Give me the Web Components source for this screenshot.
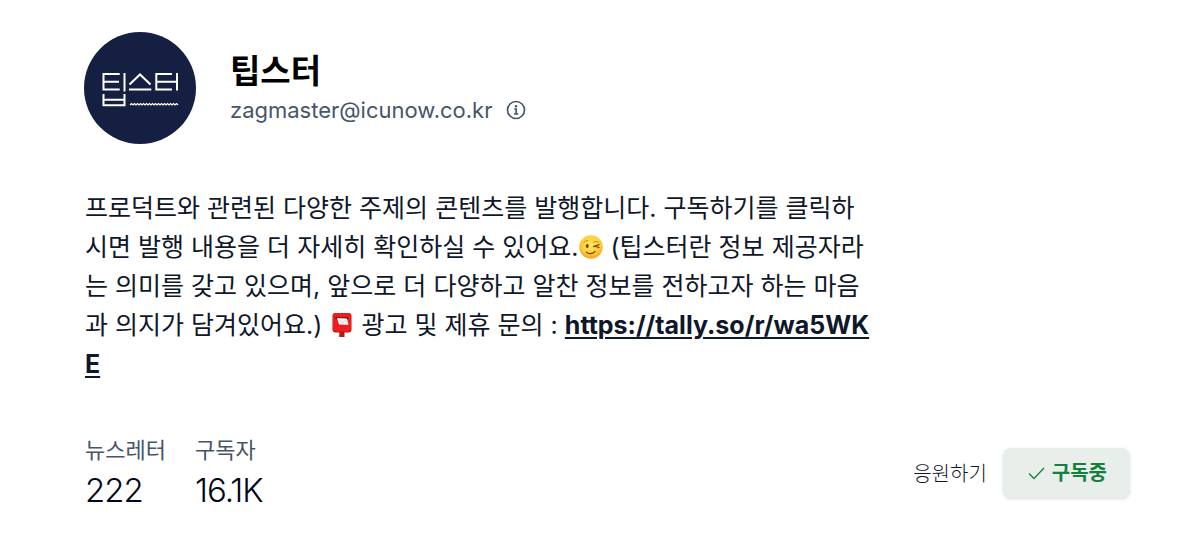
<!DOCTYPE html>
<html lang="ko">
<head>
<meta charset="utf-8">
<meta name="viewport" content="width=device-width, initial-scale=1">
<title>팁스터</title>
<style>
  body {
    margin: 0;
    background: #fff;
    color: #0f172a;
    font-family: Inter, "Noto Sans CJK KR", sans-serif;
    font-size: 25px;
  }
</style>
</head>
<body>
<creator-page>
  <creator-header slot="header" name="팁스터" email="zagmaster@icunow.co.kr"></creator-header>
  <creator-intro slot="intro">프로덕트와 관련된 다양한 주제의 콘텐츠를 발행합니다. 구독하기를 클릭하시면 발행 내용을 더 자세히 확인하실 수 있어요.<emoji-icon name="wink"></emoji-icon> (팁스터란 정보 제공자라는 의미를 갖고 있으며, 앞으로 더 다양하고 알찬 정보를 전하고자 하는 마음과 의지가 담겨있어요.) <emoji-icon name="postbox"></emoji-icon> 광고 및 제휴 문의 : <text-link href="https://tally.so/r/wa5WKE">https://tally.so/r/wa5WKE</text-link></creator-intro>
  <stat-item slot="stats" label="뉴스레터">222</stat-item>
  <stat-item slot="stats" label="구독자">16.1K</stat-item>
  <cheer-button slot="actions">응원하기</cheer-button>
  <subscribe-button slot="actions">구독중</subscribe-button>
</creator-page>

<script>
class CreatorPage extends HTMLElement {
  constructor() {
    super();
    this.attachShadow({ mode: 'open' });
  }

  connectedCallback() {
    this.shadowRoot.innerHTML = `
      <style>
        :host {
          display: block;
        }

        main {
          padding: 32px 70px 32px 85px;
        }

        .intro {
          max-width: 786px;
          margin-top: 45px;
        }

        footer {
          display: flex;
          justify-content: space-between;
          align-items: center;
          margin-top: 49px;
        }

        .stats {
          display: flex;
          gap: 29px;
        }

        .actions {
          display: flex;
          align-items: center;
          gap: 16px;
        }
      </style>

      <main>
        <slot name="header"></slot>
        <div class="intro"><slot name="intro"></slot></div>
        <footer>
          <div class="stats"><slot name="stats"></slot></div>
          <div class="actions"><slot name="actions"></slot></div>
        </footer>
      </main>
    `;
  }
}

class CreatorLogo extends HTMLElement {
  constructor() {
    super();
    this.attachShadow({ mode: 'open' });
  }

  connectedCallback() {
    this.shadowRoot.innerHTML = `
      <style>
        :host {
          display: block;
          flex: none;
        }

        svg {
          display: block;
          width: 112px;
          height: 112px;
        }
      </style>

      <svg viewBox="0 0 112 112" role="img" aria-label="팁스터 로고">
        <circle cx="56" cy="56" r="56" fill="#141f41"/>
        <g fill="none" stroke="#fff" stroke-width="2">
          <path d="M35.700 42H19.500V57.500H35.700M19.500 49.700H35"/>
          <path d="M40.500 41V59.500"/>
          <path d="M19.500 62V73.200H40.500V62M19.500 67.700H40.500"/>
          <path d="M45.500 52.500L56 42.500L66.500 52.500M45 57.500H67.300"/>
          <path d="M88 42H72.300V57.500H88M72.300 49.700H86"/>
          <path d="M93 41V58.500M86 49.700H93"/>
          <path stroke-width="1.200" d="M46 73l1.500-1.500l1.500 1.500l1.500-1.500l1.500 1.500l1.500-1.500l1.500 1.500l1.500-1.500l1.500 1.500l1.500-1.500l1.500 1.500l1.500-1.500l1.500 1.500l1.500-1.500l1.500 1.500l1.500-1.500l1.500 1.500l1.500-1.500l1.500 1.500l1.500-1.500l1.500 1.500l1.500-1.500l1.500 1.500l1.500-1.500l1.500 1.500l1.500-1.500l1.500 1.500l1.500-1.500l1.500 1.500l1.500-1.500l1.500 1.500l1.500-1.500l1.500 1.500"/>
        </g>
      </svg>
    `;
  }
}

class CreatorHeader extends HTMLElement {
  constructor() {
    super();
    this.attachShadow({ mode: 'open' });
  }

  connectedCallback() {
    this.shadowRoot.innerHTML = `
      <style>
        :host {
          display: block;
          margin-left: -1px;
        }

        header {
          display: flex;
          align-items: center;
          gap: 34px;
        }

        h1 {
          margin: 0;
          color: #000;
          font-size: 33px;
          font-weight: 700;
          line-height: 44px;
        }

        .email {
          display: flex;
          align-items: center;
          gap: 14px;
          color: #475569;
          font-size: 22px;
          line-height: 34px;
        }

        button {
          padding: 0;
          border: 0;
          background: none;
          color: inherit;
          cursor: pointer;
        }

        svg {
          display: block;
          width: 20px;
          height: 20px;
        }
      </style>

      <header>
        <creator-logo></creator-logo>
        <div>
          <h1>${this.getAttribute('name')}</h1>
          <div class="email">
            <span>${this.getAttribute('email')}</span>
            <button type="button" aria-label="정보">
              <svg viewBox="0 0 20 20" fill="none" stroke="currentColor" stroke-width="1.700">
                <circle cx="10" cy="10" r="8.500"/>
                <path d="M8.300 9H10.200V14M8 14H12.300"/>
                <circle cx="10" cy="6.200" r="1.200" fill="currentColor" stroke="none"/>
              </svg>
            </button>
          </div>
        </div>
      </header>
    `;
  }
}

class CreatorIntro extends HTMLElement {
  constructor() {
    super();
    this.attachShadow({ mode: 'open' });
  }

  connectedCallback() {
    this.shadowRoot.innerHTML = `
      <style>
        :host {
          display: block;
        }

        p {
          margin: 0;
          font-size: 25px;
          line-height: 39px;
          word-break: break-all;
        }
      </style>

      <p><slot></slot></p>
    `;
  }
}

class TextLink extends HTMLElement {
  constructor() {
    super();
    this.attachShadow({ mode: 'open' });
  }

  connectedCallback() {
    this.shadowRoot.innerHTML = `
      <style>
        :host {
          display: inline;
        }

        a {
          color: inherit;
          font-weight: 700;
          text-decoration: underline;
          text-decoration-thickness: 2px;
          text-underline-offset: 3px;
        }
      </style><a href="${this.getAttribute('href')}"><slot></slot></a>`;
  }
}

const emojis = {
  wink: `
    <svg viewBox="0 0 24 24" role="img" aria-label="😉">
      <defs>
        <radialGradient id="face" cx="50%" cy="40%" r="60%">
          <stop offset="0" stop-color="#ffe65c"/>
          <stop offset="0.650" stop-color="#ffd03b"/>
          <stop offset="1" stop-color="#f5a019"/>
        </radialGradient>
      </defs>
      <circle cx="12" cy="12" r="11.700" fill="url(#face)"/>
      <ellipse cx="8.300" cy="11" rx="1.400" ry="2.100" fill="#6b3f0c"/>
      <g fill="none" stroke="#7a4a10" stroke-linecap="round" stroke-linejoin="round">
        <path stroke-width="0.800" stroke="#b07a1c" d="M4.500 7.500Q6 5.200 9 5.600M14.500 7Q17 5.500 19.500 7.200"/>
        <path stroke-width="1.300" d="M20 9.700L14.500 11.500Q17 11.300 20 12.600"/>
        <path stroke-width="1.400" d="M7.500 17.200Q12 20.500 16 16.500"/>
      </g>
    </svg>`,
  postbox: `
    <svg viewBox="0 0 24 24" role="img" aria-label="📮">
      <path fill="#9f2020" d="M9.500 18H14.500V24H9.500z"/>
      <path fill="#c61818" d="M9.500 19H12V24H9.500z"/>
      <rect x="2.500" y="0" width="19" height="19.500" rx="3" fill="#bd1217"/>
      <rect x="3" y="0" width="18" height="18.500" rx="3" fill="#ee1d20"/>
      <path fill="#3c1014" d="M5.500 4.500H18.500V6H5.500z"/>
      <path fill="#f4f2f2" d="M7 5L17 5.500L18.500 12L9 11.500z"/>
      <path fill="none" stroke="#d4cccc" stroke-width="0.600" d="M8 6.500L13 9.500L17 6.500"/>
    </svg>`
};

class EmojiIcon extends HTMLElement {
  constructor() {
    super();
    this.attachShadow({ mode: 'open' });
  }

  connectedCallback() {
    this.shadowRoot.innerHTML = `
      <style>
        :host {
          display: inline-block;
          width: 24px;
          height: 24px;
          margin-left: 1px;
          vertical-align: -3px;
          line-height: 0;
        }

        svg {
          width: 100%;
          height: 100%;
        }
      </style>
      ${emojis[this.getAttribute('name')]}
    `;
  }
}

class StatItem extends HTMLElement {
  constructor() {
    super();
    this.attachShadow({ mode: 'open' });
  }

  connectedCallback() {
    this.shadowRoot.innerHTML = `
      <style>
        :host {
          display: block;
        }

        dl {
          margin: 0;
        }

        dt {
          color: #475569;
          font-size: 22px;
          line-height: 34px;
        }

        dd {
          margin: 0;
          color: #020617;
          font-size: 33px;
          font-weight: 300;
          line-height: 46px;
          letter-spacing: -1px;
        }
      </style>

      <dl>
        <dt>${this.getAttribute('label')}</dt>
        <dd><slot></slot></dd>
      </dl>
    `;
  }
}

class CheerButton extends HTMLElement {
  constructor() {
    super();
    this.attachShadow({ mode: 'open' });
  }

  connectedCallback() {
    this.shadowRoot.innerHTML = `
      <style>
        :host {
          display: block;
        }

        button {
          padding: 0;
          border: 0;
          background: none;
          color: #0f172a;
          font-family: inherit;
          font-size: 20px;
          font-weight: 300;
          line-height: 30px;
          cursor: pointer;
        }
      </style>

      <button type="button"><slot></slot></button>
    `;
  }
}

class SubscribeButton extends HTMLElement {
  constructor() {
    super();
    this.attachShadow({ mode: 'open' });
  }

  connectedCallback() {
    this.shadowRoot.innerHTML = `
      <style>
        :host {
          display: block;
        }

        button {
          display: flex;
          align-items: center;
          gap: 6px;
          padding: 10px 23px;
          border: 0;
          border-radius: 8px;
          background: #e8eeea;
          box-shadow: 0 1px 3px rgba(15, 23, 42, 0.15);
          color: #15803d;
          font-family: inherit;
          font-size: 20px;
          font-weight: 700;
          line-height: 30px;
          cursor: pointer;
        }

        svg {
          width: 20px;
          height: 20px;
        }
      </style>

      <button type="button" aria-pressed="true">
        <svg viewBox="0 0 20 20" fill="none" stroke="currentColor" stroke-width="1.300" aria-hidden="true">
          <path d="M3 10.500L8 15.500L18 5"/>
        </svg>
        <slot></slot>
      </button>
    `;
  }
}

customElements.define('creator-page', CreatorPage);
customElements.define('creator-logo', CreatorLogo);
customElements.define('creator-header', CreatorHeader);
customElements.define('creator-intro', CreatorIntro);
customElements.define('text-link', TextLink);
customElements.define('emoji-icon', EmojiIcon);
customElements.define('stat-item', StatItem);
customElements.define('cheer-button', CheerButton);
customElements.define('subscribe-button', SubscribeButton);
</script>
</body>
</html>
